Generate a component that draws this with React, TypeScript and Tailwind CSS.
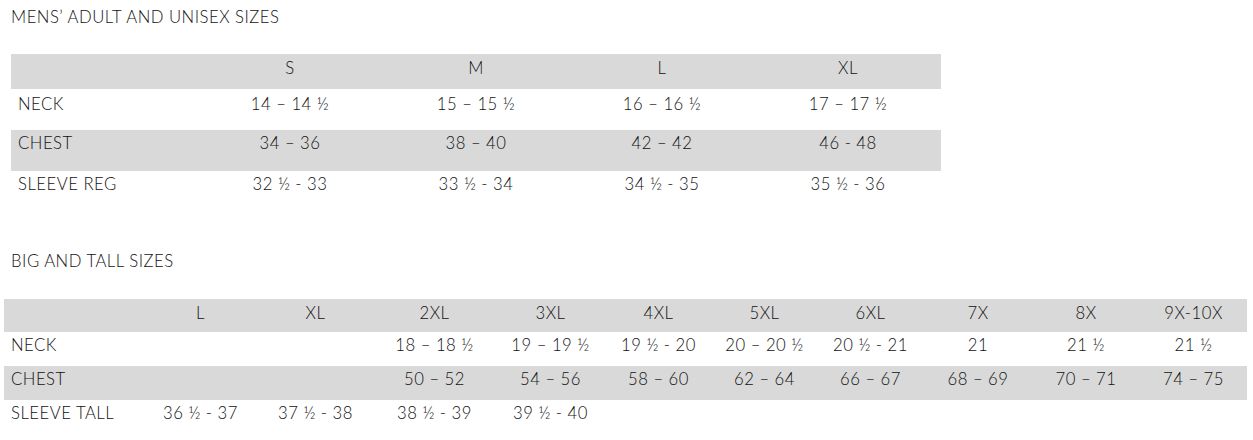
const mens = {
  sizes: ["S", "M", "L", "XL"],
  rows: [
    { label: "NECK", values: ["14 – 14 ½", "15 – 15 ½", "16 – 16 ½", "17 – 17 ½"] },
    { label: "CHEST", values: ["34 – 36", "38 – 40", "42 – 42", "46 - 48"] },
    { label: "SLEEVE REG", values: ["32 ½ - 33", "33 ½ - 34", "34 ½ - 35", "35 ½ - 36"] },
  ],
};

const bigTall = {
  sizes: ["L", "XL", "2XL", "3XL", "4XL", "5XL", "6XL", "7X", "8X", "9X-10X"],
  rows: [
    { label: "NECK", values: ["", "", "18 – 18 ½", "19 – 19 ½", "19 ½ - 20", "20 – 20 ½", "20 ½ - 21", "21", "21 ½", "21 ½"] },
    { label: "CHEST", values: ["", "", "50 – 52", "54 – 56", "58 – 60", "62 – 64", "66 – 67", "68 – 69", "70 – 71", "74 – 75"] },
    { label: "SLEEVE TALL", values: ["36 ½ - 37", "37 ½ - 38", "38 ½ - 39", "39 ½ - 40", "", "", "", "", "", ""] },
  ],
};

const bigCols = ["w-[139px]", "w-[115px]", "w-[115px]", "w-[123px]", "w-[109px]", "w-[107px]", "w-[105px]", "w-[107px]", "w-[108px]", "w-[108px]", "w-[107px]"];

export default function App() {
  return (
    <div className="bg-white min-h-screen text-[#111] font-light text-[16.7px] leading-[20px] tracking-[0.5px] font-['Lato','Open_Sans',sans-serif]">
      {/* Mens' adult */}
      <h2 className="pt-[7px] pl-[11px] font-light">MENS’ ADULT AND UNISEX SIZES</h2>

      <table className="ml-[11px] mt-[27px] table-fixed border-collapse w-[930px]">
        <colgroup>
          {[0, 1, 2, 3, 4].map((i) => (
            <col key={i} className="w-[186px]" />
          ))}
        </colgroup>
        <thead>
          <tr className="bg-[#d9d9d9] h-[35px]">
            <th className="p-0" />
            {mens.sizes.map((s) => (
              <th key={s} className="p-0 pt-[4px] align-top text-center font-light">{s}</th>
            ))}
          </tr>
        </thead>
        <tbody>
          {mens.rows.map((row, i) => (
            <tr key={row.label} className={i === 1 ? "bg-[#d9d9d9] h-[41px]" : i === 0 ? "h-[41px]" : "h-[40px]"}>
              <td className={`p-0 pl-[7px] align-top ${i === 0 ? "pt-[5px]" : "pt-[3px]"}`}>{row.label}</td>
              {row.values.map((v, j) => (
                <td key={j} className={`p-0 align-top text-center ${i === 0 ? "pt-[5px]" : "pt-[3px]"}`}>{v}</td>
              ))}
            </tr>
          ))}
        </tbody>
      </table>

      {/* Big and tall */}
      <h2 className="mt-[40px] pl-[11px] font-light">BIG AND TALL SIZES</h2>

      <table className="ml-[4px] mt-[28px] table-fixed border-collapse w-[1243px]">
        <colgroup>
          {bigCols.map((c, i) => (
            <col key={i} className={c} />
          ))}
        </colgroup>
        <thead>
          <tr className="bg-[#d9d9d9] h-[33px]">
            <th className="p-0" />
            {bigTall.sizes.map((s) => (
              <th key={s} className="p-0 pt-[4px] align-top text-center font-light">{s}</th>
            ))}
          </tr>
        </thead>
        <tbody>
          {bigTall.rows.map((row, i) => (
            <tr key={row.label} className={i === 1 ? "bg-[#d9d9d9] h-[34px]" : "h-[34px]"}>
              <td className="p-0 pl-[7px] pt-[3px] align-top whitespace-nowrap">{row.label}</td>
              {row.values.map((v, j) => (
                <td key={j} className="p-0 pt-[3px] align-top text-center whitespace-nowrap">{v}</td>
              ))}
            </tr>
          ))}
        </tbody>
      </table>
    </div>
  );
}
